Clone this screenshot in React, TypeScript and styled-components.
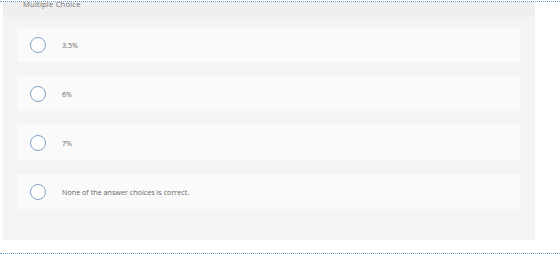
import React from 'react'
import styled, { createGlobalStyle } from 'styled-components'

const Global = createGlobalStyle`
  body {
    margin: 0;
    background: #ffffff;
    font-family: "Open Sans", "Liberation Sans", Arial, sans-serif;
  }
`

const Page = styled.div`
  width: 560px;
  height: 257px;
  overflow: hidden;
  position: relative;
`

const Rule = styled.div<{ $top: number }>`
  height: 0;
  border-top: 1px dotted #6a9cd6;
  margin-top: ${p => p.$top}px;
`

const Panel = styled.section`
  margin-left: 3px;
  width: 532px;
  height: 238px;
  background: #f4f4f4;
  display: flex;
  flex-direction: column;
`

const Header = styled.div`
  height: 15px;
  background: #efefef;
  padding-left: 20px;
  overflow: hidden;
  font-size: 7.6px;
  line-height: 9px;
  color: #707070;
`

const HeaderText = styled.span`
  display: block;
  margin-top: -2px;
  letter-spacing: 0.2px;
`

const List = styled.div`
  display: flex;
  flex-direction: column;
  gap: 14px;
  padding: 10px 15px 0 14px;
`

const Option = styled.label`
  height: 35px;
  background: #fafafa;
  display: flex;
  align-items: center;
  gap: 16px;
  padding-left: 13px;
  padding-top: 1px;
  box-sizing: border-box;
`

const Radio = styled.span`
  width: 14px;
  height: 14px;
  border: 1px solid #7fa2c8;
  border-radius: 50%;
  background: #ffffff;
  flex: none;
`

const OptionText = styled.span`
  font-size: 7.2px;
  color: #666666;
`

const choices = ['3.5%', '6%', '7%', 'None of the answer choices is correct.']

export default function App() {
  return (
    <Page>
      <Global />
      <Rule $top={1} />
      <Panel>
        <Header>
          <HeaderText>Multiple Choice</HeaderText>
        </Header>
        <List>
          {choices.map(c => (
            <Option key={c}>
              <Radio />
              <OptionText>{c}</OptionText>
            </Option>
          ))}
        </List>
      </Panel>
      <Rule $top={13} />
    </Page>
  )
}
